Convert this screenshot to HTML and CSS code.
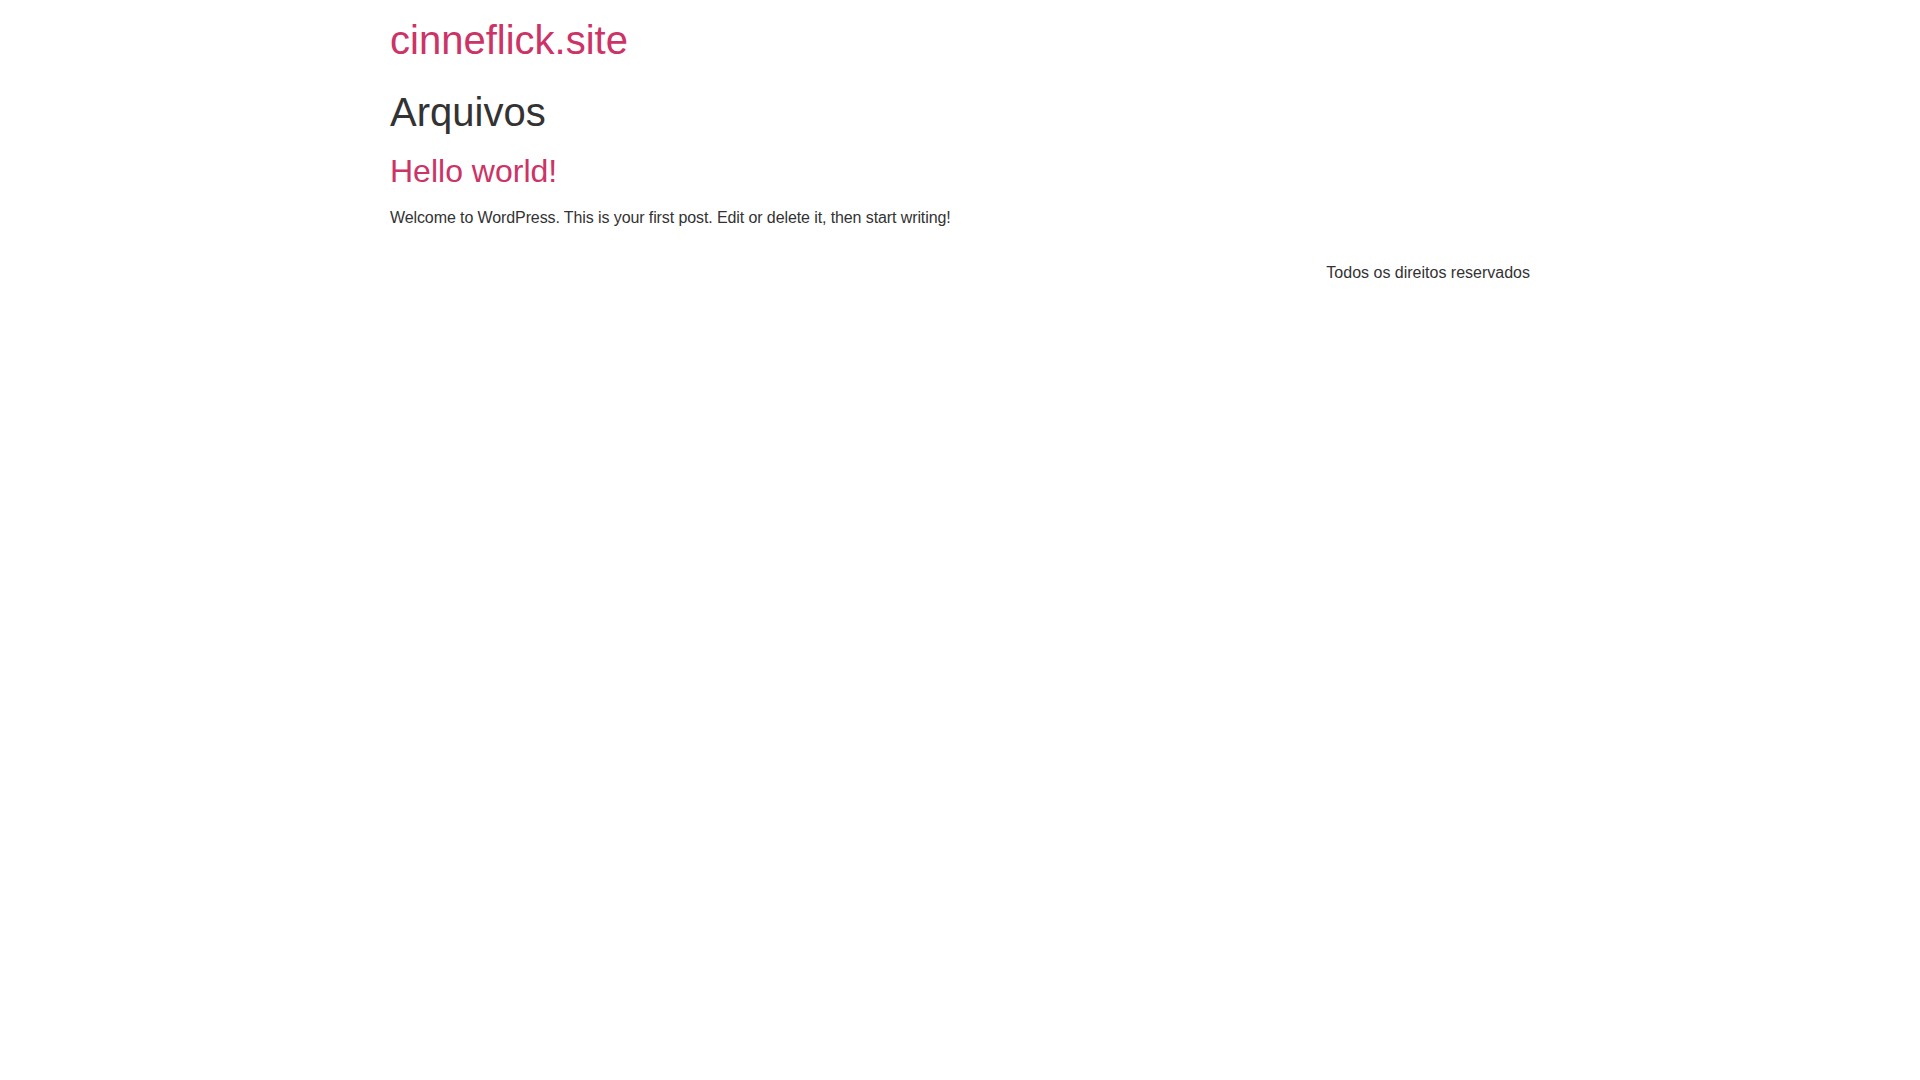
FILE: index.html
```html
<!DOCTYPE html>
<html lang="pt-BR">
<head>
<meta charset="utf-8">
<title>Arquivos – cinneflick.site</title>
<link rel="stylesheet" href="styles.css">
</head>
<body>
<header class="site-header">
  <div class="site-branding">
    <h1 class="site-title"><a href="#">cinneflick.site</a></h1>
  </div>
</header>
<main class="site-main">
  <div class="page-header">
    <h1 class="entry-title">Arquivos</h1>
  </div>
  <div class="page-content">
    <article class="post">
      <h2 class="entry-title"><a href="#">Hello world!</a></h2>
      <p class="excerpt">Welcome to WordPress. This is your first post. Edit or delete it, then start writing!</p>
    </article>
  </div>
</main>
<footer class="site-footer">
  <div class="copyright"><p>Todos os direitos reservados</p></div>
</footer>
</body>
</html>
```
FILE: styles.css
```css
html { margin: 0; }
body {
  margin: 0;
  background: #fff;
  color: #333;
  font-family: "Liberation Sans", Arial, sans-serif;
  font-size: 16px;
  line-height: 1.5;
}
a { color: #c36; text-decoration: none; }
h1, h2 {
  margin: 8px 0 16px;
  font-weight: 500;
  line-height: 1.2;
}
h1 { font-size: 40px; }
h2 { font-size: 32px; }
p { margin: 0 0 14.4px; }
.excerpt { letter-spacing: -0.1px; }
.site-header, .site-main, .site-footer {
  max-width: 1140px;
  margin: 0 auto;
}
.site-header {
  display: flex;
  justify-content: space-between;
  padding: 16px 0;
}
.site-title { margin: 0; }
.site-footer {
  display: flex;
  justify-content: flex-end;
  padding: 16px 0;
}
.site-footer p { margin: 0; }
```
